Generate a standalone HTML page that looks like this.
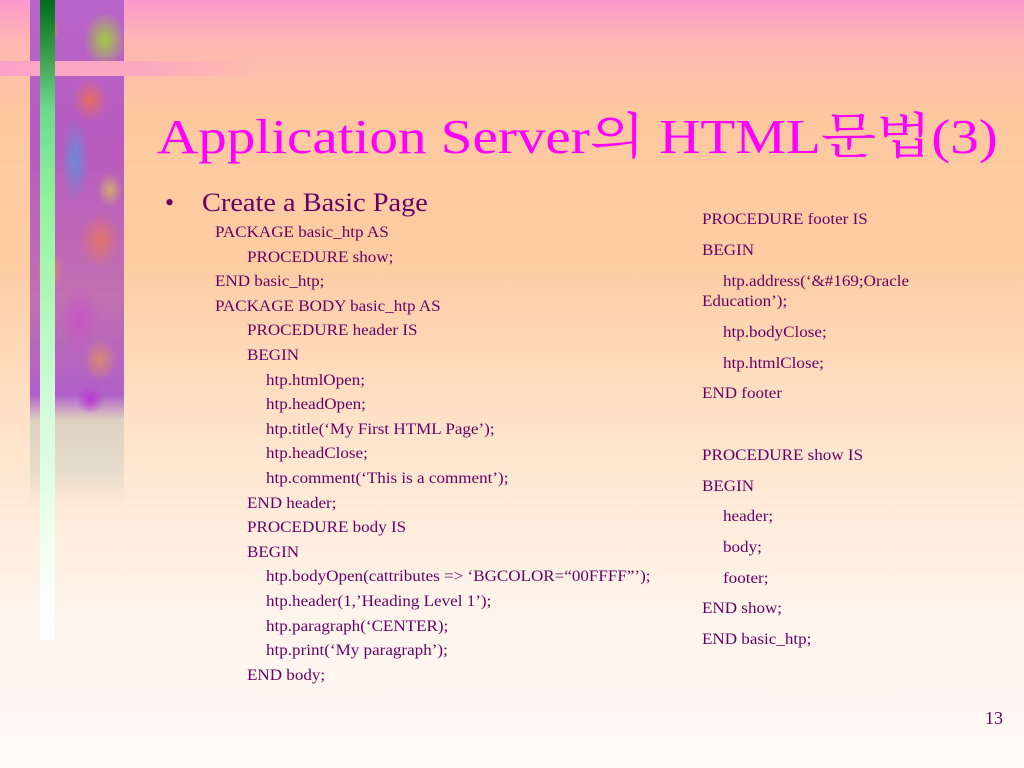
<!DOCTYPE html>
<html><head><meta charset="utf-8"><style>
html,body{margin:0;padding:0}
body{width:1024px;height:768px;position:relative;overflow:hidden;
background:linear-gradient(to bottom,#fb98cc 0px,#fdb6b4 40px,#fdc8a0 110px,#fdcca2 260px,#fee2c8 420px,#fff3ea 600px,#fffbf7 768px);
font-family:"Liberation Serif","Times New Roman",Times,"Tinos",serif;color:#660066}
.t{position:absolute;white-space:nowrap;font-size:15.5px;line-height:18px;transform:scaleX(1.1);transform-origin:0 0}
#pat{position:absolute;left:30px;top:0;width:94px;height:505px;
background:
radial-gradient(ellipse 30px 40px at 75px 40px,rgba(160,210,60,.95),transparent 70%),
radial-gradient(ellipse 15px 20px at 20px 30px,rgba(230,140,90,.8),transparent 70%),
radial-gradient(ellipse 25px 30px at 60px 100px,rgba(240,110,70,.8),transparent 70%),
radial-gradient(ellipse 20px 60px at 45px 160px,rgba(80,150,220,.8),transparent 70%),
radial-gradient(ellipse 18px 25px at 80px 190px,rgba(220,200,80,.7),transparent 70%),
radial-gradient(ellipse 30px 40px at 70px 240px,rgba(240,120,80,.75),transparent 70%),
radial-gradient(ellipse 20px 30px at 20px 270px,rgba(230,150,90,.7),transparent 70%),
radial-gradient(ellipse 30px 50px at 50px 320px,rgba(200,80,200,.8),transparent 70%),
radial-gradient(ellipse 25px 30px at 70px 360px,rgba(230,150,80,.7),transparent 70%),
radial-gradient(ellipse 20px 20px at 60px 400px,rgba(190,40,220,.8),transparent 70%),
linear-gradient(to bottom,#b864c8 0,#b85cc0 150px,#c070b0 300px,#b060c8 395px,#ddd2c0 420px,#e6dccb 470px,rgba(220,210,200,0) 505px);}
#pink{position:absolute;left:0;top:61px;width:260px;height:15px;background:linear-gradient(to right,#fca2c8 0,#fcaac0 150px,rgba(252,170,190,0) 260px)}
#green{position:absolute;left:40px;top:0;width:15px;height:640px;background:linear-gradient(to bottom,#006e1a 0,#3d9e4c 55px,#6fd890 110px,#90f29c 200px,#d0fbd8 400px,#f4fff4 560px,#ffffff 640px)}
.ti{font-family:"Liberation Serif","Times New Roman",Times,"Tinos","Noto Serif CJK SC",serif}
</style></head><body>
<div id="pat"></div>
<div id="pink"></div>
<div id="green"></div>
<div class="t ti" style="left:157px;top:108px;font-size:49px;line-height:58px;color:#ff00ff;transform:scaleX(1.165)">Application Server의 HTML문법(3)</div>
<div class="t" style="left:165px;top:188px;font-size:26px;line-height:30px;transform:none">•</div>
<div class="t" style="left:202px;top:188px;font-size:26px;line-height:30px;transform:scaleX(1.09)">Create a Basic Page</div>
<div class="t" style="left:215px;top:224px">PACKAGE basic_htp AS</div>
<div class="t" style="left:247px;top:249px">PROCEDURE show;</div>
<div class="t" style="left:215px;top:273px">END basic_htp;</div>
<div class="t" style="left:215px;top:298px">PACKAGE BODY basic_htp AS</div>
<div class="t" style="left:247px;top:322px">PROCEDURE header IS</div>
<div class="t" style="left:247px;top:347px">BEGIN</div>
<div class="t" style="left:266px;top:372px">htp.htmlOpen;</div>
<div class="t" style="left:266px;top:396px">htp.headOpen;</div>
<div class="t" style="left:266px;top:421px">htp.title(‘My First HTML Page’);</div>
<div class="t" style="left:266px;top:445px">htp.headClose;</div>
<div class="t" style="left:266px;top:470px">htp.comment(‘This is a comment’);</div>
<div class="t" style="left:247px;top:495px">END header;</div>
<div class="t" style="left:247px;top:519px">PROCEDURE body IS</div>
<div class="t" style="left:247px;top:544px">BEGIN</div>
<div class="t" style="left:266px;top:568px">htp.bodyOpen(cattributes =&gt; ‘BGCOLOR=“00FFFF”’);</div>
<div class="t" style="left:266px;top:593px">htp.header(1,’Heading Level 1’);</div>
<div class="t" style="left:266px;top:618px">htp.paragraph(‘CENTER);</div>
<div class="t" style="left:266px;top:642px">htp.print(‘My paragraph’);</div>
<div class="t" style="left:247px;top:667px">END body;</div>

<div class="t" style="left:702px;top:211px">PROCEDURE footer IS</div>
<div class="t" style="left:702px;top:242px">BEGIN</div>
<div class="t" style="left:723px;top:273px">htp.address(‘&amp;#169;Oracle</div>
<div class="t" style="left:702px;top:293px">Education’);</div>
<div class="t" style="left:723px;top:324px">htp.bodyClose;</div>
<div class="t" style="left:723px;top:355px">htp.htmlClose;</div>
<div class="t" style="left:702px;top:385px">END footer</div>
<div class="t" style="left:702px;top:447px">PROCEDURE show IS</div>
<div class="t" style="left:702px;top:478px">BEGIN</div>
<div class="t" style="left:723px;top:508px">header;</div>
<div class="t" style="left:723px;top:539px">body;</div>
<div class="t" style="left:723px;top:570px">footer;</div>
<div class="t" style="left:702px;top:600px">END show;</div>
<div class="t" style="left:702px;top:631px">END basic_htp;</div>
<div class="t" style="left:985px;top:708px;font-size:18px;line-height:20px;transform:none">13</div>
</body></html>
